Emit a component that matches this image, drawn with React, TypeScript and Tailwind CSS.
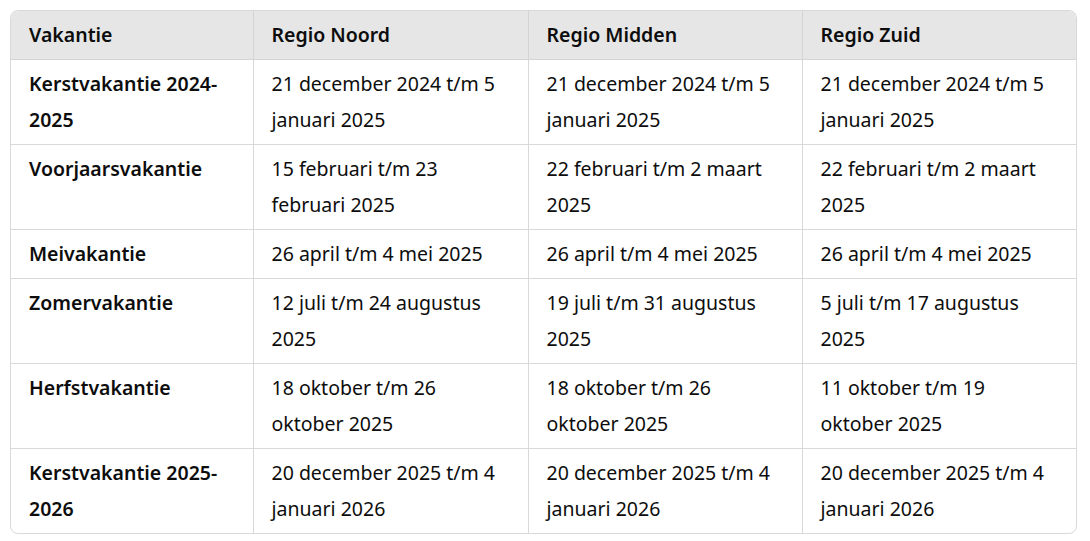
import React from "react";

const rows: [string, string, string, string][] = [
  ["Kerstvakantie 2024-2025", "21 december 2024 t/m 5 januari 2025", "21 december 2024 t/m 5 januari 2025", "21 december 2024 t/m 5 januari 2025"],
  ["Voorjaarsvakantie", "15 februari t/m 23 februari 2025", "22 februari t/m 2 maart 2025", "22 februari t/m 2 maart 2025"],
  ["Meivakantie", "26 april t/m 4 mei 2025", "26 april t/m 4 mei 2025", "26 april t/m 4 mei 2025"],
  ["Zomervakantie", "12 juli t/m 24 augustus 2025", "19 juli t/m 31 augustus 2025", "5 juli t/m 17 augustus 2025"],
  ["Herfstvakantie", "18 oktober t/m 26 oktober 2025", "18 oktober t/m 26 oktober 2025", "11 oktober t/m 19 oktober 2025"],
  ["Kerstvakantie 2025-2026", "20 december 2025 t/m 4 januari 2026", "20 december 2025 t/m 4 januari 2026", "20 december 2025 t/m 4 januari 2026"],
];

const headers = ["Vakantie", "Regio Noord", "Regio Midden", "Regio Zuid"];
const widths = ["w-[242px]", "w-[275px]", "w-[274px]", "w-[276px]"];

export default function App() {
  return (
    <div className="bg-white w-[1090px] h-[541px] pt-[10px] pl-[10px]" style={{ fontFamily: '"Noto Sans", "Open Sans", sans-serif' }}>
      <div className="w-[1067px] border border-[#d9d9d9] rounded-[8px] overflow-hidden">
        <table className="w-full border-collapse table-fixed text-[19.5px] text-[#0d0d0d]">
          <thead>
            <tr className="bg-[#e6e6e6]">
              {headers.map((h, i) => (
                <th key={h} className={`${widths[i]} text-left font-semibold px-[18px] py-[6px] leading-[36px] border-b border-[#d4d4d4] ${i > 0 ? "border-l" : ""}`}>
                  {h}
                </th>
              ))}
            </tr>
          </thead>
          <tbody>
            {rows.map((r, ri) => (
              <tr key={ri}>
                {r.map((c, ci) => (
                  <td key={ci} className={`align-top px-[18px] py-[6px] leading-[36px] border-[#d9d9d9] ${ci > 0 ? "border-l" : ""} ${ri < rows.length - 1 ? "border-b" : ""} ${ci === 0 ? "font-semibold" : ""}`}>
                    {c}
                  </td>
                ))}
              </tr>
            ))}
          </tbody>
        </table>
      </div>
    </div>
  );
}
